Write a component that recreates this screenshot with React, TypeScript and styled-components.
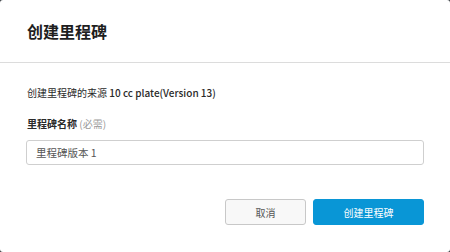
import styled, { createGlobalStyle } from "styled-components";

const GlobalStyle = createGlobalStyle`
  html, body {
    margin: 0;
    padding: 0;
    background: #3a3f44;
  }
  body {
    font-family: "Noto Sans CJK SC", "Noto Sans", sans-serif;
  }
`;

const Dialog = styled.div`
  width: 450px;
  height: 252px;
  box-sizing: border-box;
  background: #ffffff;
  border-radius: 3px;
  display: flex;
  flex-direction: column;
  overflow: hidden;
`;

const Header = styled.div`
  height: 63px;
  box-sizing: border-box;
  padding: 0 27px;
  display: flex;
  align-items: center;
  border-bottom: 1px solid #dcdcdc;
`;

const Title = styled.h2`
  margin: 0;
  font-size: 16px;
  font-weight: 700;
  color: #1e1e1e;
`;

const Body = styled.div`
  flex: 1;
  padding: 22px 26px 0 26px;
  display: flex;
  flex-direction: column;
`;

const Source = styled.p`
  margin: 0;
  padding-left: 1px;
  font-size: 10px;
  line-height: 16px;
  color: #2a2a2a;
`;

const Plate = styled.span`
  font-weight: 500;
`;

const Label = styled.label`
  margin-top: 15px;
  padding-left: 1px;
  font-size: 10px;
  line-height: 16px;
  font-weight: 700;
  color: #2a2a2a;
`;

const Hint = styled.span`
  font-weight: 400;
  color: #9a9a9a;
`;

const Input = styled.input`
  margin-top: 8px;
  height: 25px;
  box-sizing: border-box;
  width: 100%;
  border: 1px solid #cfcfcf;
  border-radius: 3px;
  padding: 0 9px;
  font-family: inherit;
  font-size: 10.5px;
  color: #555555;
  outline: none;
`;

const Footer = styled.div`
  display: flex;
  justify-content: flex-end;
  gap: 7px;
  margin-top: 34px;
`;

const Button = styled.button<{ $primary?: boolean }>`
  height: 26px;
  box-sizing: border-box;
  border-radius: 3px;
  font-family: inherit;
  font-size: 10px;
  cursor: pointer;
  width: ${(p) => (p.$primary ? "111px" : "81px")};
  border: 1px solid ${(p) => (p.$primary ? "#0996d6" : "#c8c8c8")};
  background: ${(p) => (p.$primary ? "#0996d6" : "#f8f8f8")};
  color: ${(p) => (p.$primary ? "#ffffff" : "#555555")};
`;

export default function App() {
  return (
    <>
      <GlobalStyle />
      <Dialog>
        <Header>
          <Title>创建里程碑</Title>
        </Header>
        <Body>
          <Source>
            创建里程碑的来源 <Plate>10 cc plate(Version 13)</Plate>
          </Source>
          <Label>
            里程碑名称 <Hint>(必需)</Hint>
          </Label>
          <Input defaultValue="里程碑版本 1" />
          <Footer>
            <Button>取消</Button>
            <Button $primary>创建里程碑</Button>
          </Footer>
        </Body>
      </Dialog>
    </>
  );
}
